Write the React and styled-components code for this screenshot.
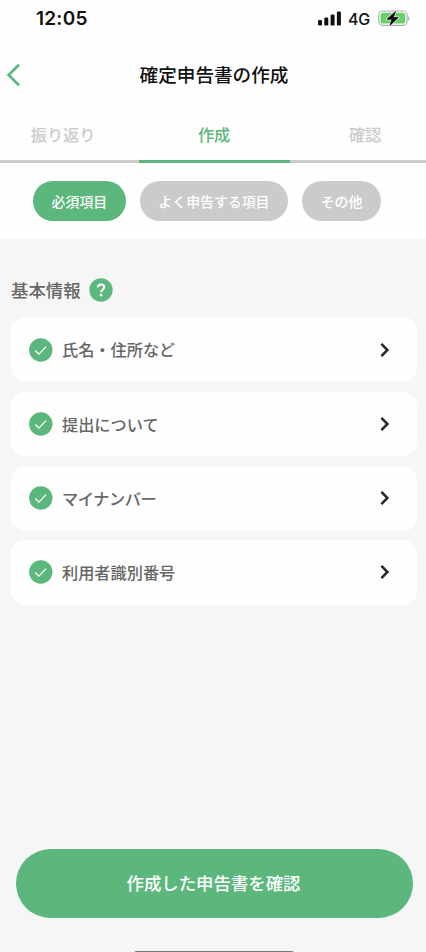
import React from "react"
import styled, { createGlobalStyle } from "styled-components"

const GlobalStyle = createGlobalStyle`
  :root {
    --green: #5cb77c;
    --gray: #cbcbcb;
    --text: #666666;
    --bg: #f6f6f6;
  }
  * {
    box-sizing: border-box;
  }
  body {
    margin: 0;
    overflow: hidden;
    font-family: "Noto Sans CJK JP", "Noto Sans", sans-serif;
  }
  button {
    border: 0;
    padding: 0;
    background: none;
    font-family: inherit;
  }
  ul {
    list-style: none;
    margin: 0;
    padding: 0;
  }
`

const Screen = styled.div`
  display: flex;
  flex-direction: column;
  width: 426px;
  height: 952px;
  overflow: hidden;
  background: var(--bg);
`

const Top = styled.div`
  height: 239px;
  background: #fefefe;
`

const StatusBar = styled.div`
  display: flex;
  align-items: center;
  justify-content: space-between;
  height: 37px;
  padding: 0 16px 0 36px;
  font-family: Inter, sans-serif;
  color: #111;
`

const Time = styled.span`
  font-size: 19px;
  font-weight: 600;
  line-height: 37px;
  letter-spacing: 0.25px;
`

const StatusIcons = styled.div`
  display: flex;
  align-items: center;
  span {
    width: 22px;
    margin: 0 8px 0 7px;
    font-size: 16px;
    font-weight: 500;
    letter-spacing: -0.2px;
    white-space: nowrap;
  }
  svg {
    display: block;
  }
`

const Header = styled.header`
  display: grid;
  grid-template-columns: 30px 1fr 28px;
  align-items: center;
  height: 76px;
  h1 {
    margin: 0;
    padding-bottom: 2px;
    font-size: 18.6px;
    font-weight: 500;
    line-height: 28px;
    text-align: center;
    color: #111;
  }
`

const BackButton = styled.button`
  display: flex;
  padding-left: 5px;
`

const Tabs = styled.nav`
  display: flex;
  height: 50px;
  margin-left: -12.4px;
  width: 453px;
`

const Tab = styled.button`
  flex: 1;
  padding-bottom: 5px;
  border-bottom: 3px solid ${p => (p.$active ? "var(--green)" : "var(--gray)")};
  color: ${p => (p.$active ? "var(--green)" : "var(--gray)")};
  font-size: 16.2px;
  font-weight: 500;
`

const Chips = styled.div`
  display: flex;
  gap: 14px;
  padding: 18px 33px 0;
`

const Chip = styled.button`
  height: 40px;
  padding: 0 18.6px 1px;
  border-radius: 20px;
  background: ${p => (p.$active ? "var(--green)" : "var(--gray)")};
  color: #fff;
  font-size: 13.9px;
  font-weight: 500;
  white-space: nowrap;
`

const Main = styled.main`
  flex: 1;
  padding: 36px 9px 0 11px;
`

const SectionTitle = styled.div`
  display: flex;
  align-items: center;
  height: 30px;
  gap: 8.5px;
  h2 {
    margin: 0;
    color: var(--text);
    font-size: 17.4px;
    font-weight: 500;
    line-height: 30px;
  }
`

const CardList = styled.ul`
  display: flex;
  flex-direction: column;
  gap: 9.3px;
  margin-top: 12.4px;
`

const Card = styled.li`
  display: flex;
  align-items: center;
  height: 64.9px;
  padding: 0 27px 0 18px;
  border-radius: 14px;
  background: #fefefe;
  span {
    flex: 1;
    margin-left: 9px;
    padding-bottom: 1px;
    color: var(--text);
    font-size: 16.2px;
    font-weight: 500;
    line-height: 24px;
    letter-spacing: ${p => (p.$tight ? "-0.4px" : "0")};
  }
`

const Footer = styled.footer`
  display: flex;
  flex-direction: column;
  align-items: center;
  height: 103.5px;
  padding-left: 2px;
`

const SubmitButton = styled.button`
  flex: none;
  width: 397px;
  height: 69.5px;
  padding: 0 1px 2px 0;
  border-radius: 35px;
  background: var(--green);
  color: #fff;
  font-size: 17.4px;
  font-weight: 500;
`

const HomeIndicator = styled.div`
  flex: none;
  width: 160px;
  height: 5px;
  margin-top: 33px;
  border-radius: 3px;
  background: #777;
`

const SignalIcon = () => (
  <svg width="23" height="15" viewBox="0 0 23 15" fill="#111">
    <rect x="0" y="9" width="4" height="5.5" rx="1.2" />
    <rect x="6.3" y="6.5" width="4" height="8" rx="1.2" />
    <rect x="12.6" y="3.5" width="4" height="11" rx="1.2" />
    <rect x="18.9" y="0.5" width="4" height="14" rx="1.2" />
  </svg>
)

const BatteryIcon = () => (
  <svg width="32" height="17" viewBox="0 0 32 17">
    <rect x="0.7" y="1" width="28.4" height="14.4" rx="4.4" fill="#fff" stroke="#aaa" strokeWidth="1.1" />
    <rect x="2.5" y="2.8" width="24.8" height="10.8" rx="2.6" fill="#66d16c" />
    <path d="M30.2 6.2c1.7.6 1.7 4 0 4.6z" fill="#aaa" />
    <path
      d="M17.6 1.2 9 9.3h5L11.8 15.6l8.6-8.1h-5z"
      fill="#111"
      stroke="#fff"
      strokeWidth="2"
      paintOrder="stroke"
      strokeLinejoin="round"
    />
    <path d="M17.6 1.2 9 9.3h5L11.8 15.6l8.6-8.1h-5z" fill="#111" stroke="#111" strokeWidth="0.6" />
  </svg>
)

const BackIcon = () => (
  <svg width="16" height="24" viewBox="0 0 16 24" fill="none">
    <path d="M14 1.8 3.6 12 14 22.2" stroke="#5cb77c" strokeWidth="2.7" />
  </svg>
)

const HelpIcon = () => (
  <svg width="24" height="24" viewBox="0 0 24 24" fill="none">
    <circle cx="12" cy="12" r="11.7" fill="#5cb77c" />
    <path
      d="M8.9 9.3c.1-1.8 1.4-2.8 3.2-2.8 1.7 0 3.1 1 3.1 2.7 0 2.3-3 2.4-3 4.9"
      stroke="#fff"
      strokeWidth="2.2"
    />
    <circle cx="12.1" cy="17" r="1.4" fill="#fff" />
  </svg>
)

const CheckIcon = () => (
  <svg width="24" height="24" viewBox="0 0 24 24" fill="none">
    <circle cx="11.8" cy="12" r="11.7" fill="#5cb77c" />
    <path d="m6.3 12.5 3.6 3.6 7.2-7.5" stroke="#fff" strokeWidth="1.3" />
  </svg>
)

const ArrowIcon = () => (
  <svg width="10" height="16" viewBox="0 0 10 16" fill="none">
    <path d="m1.4 1.9 6 6.1-6 6.1" stroke="#2b2b2b" strokeWidth="2.6" />
  </svg>
)

const tabs = ["振り返り", "作成", "確認"]
const chips = ["必須項目", "よく申告する項目", "その他"]
const items = [
  { name: "氏名・住所など" },
  { name: "提出について" },
  { name: "マイナンバー", tight: true },
  { name: "利用者識別番号" },
]

const App = () => {
  return (
    <>
      <GlobalStyle />
      <Screen>
        <Top>
          <StatusBar>
            <Time>12:05</Time>
            <StatusIcons>
              <SignalIcon />
              <span>4G</span>
              <BatteryIcon />
            </StatusIcons>
          </StatusBar>
          <Header>
            <BackButton aria-label="戻る">
              <BackIcon />
            </BackButton>
            <h1>確定申告書の作成</h1>
          </Header>
          <Tabs>
            {tabs.map((tab, i) => (
              <Tab key={tab} $active={i === 1}>
                {tab}
              </Tab>
            ))}
          </Tabs>
          <Chips>
            {chips.map((chip, i) => (
              <Chip key={chip} $active={i === 0}>
                {chip}
              </Chip>
            ))}
          </Chips>
        </Top>
        <Main>
          <SectionTitle>
            <h2>基本情報</h2>
            <HelpIcon />
          </SectionTitle>
          <CardList>
            {items.map(item => (
              <Card key={item.name} $tight={item.tight}>
                <CheckIcon />
                <span>{item.name}</span>
                <ArrowIcon />
              </Card>
            ))}
          </CardList>
        </Main>
        <Footer>
          <SubmitButton>作成した申告書を確認</SubmitButton>
          <HomeIndicator />
        </Footer>
      </Screen>
    </>
  )
}

export default App
